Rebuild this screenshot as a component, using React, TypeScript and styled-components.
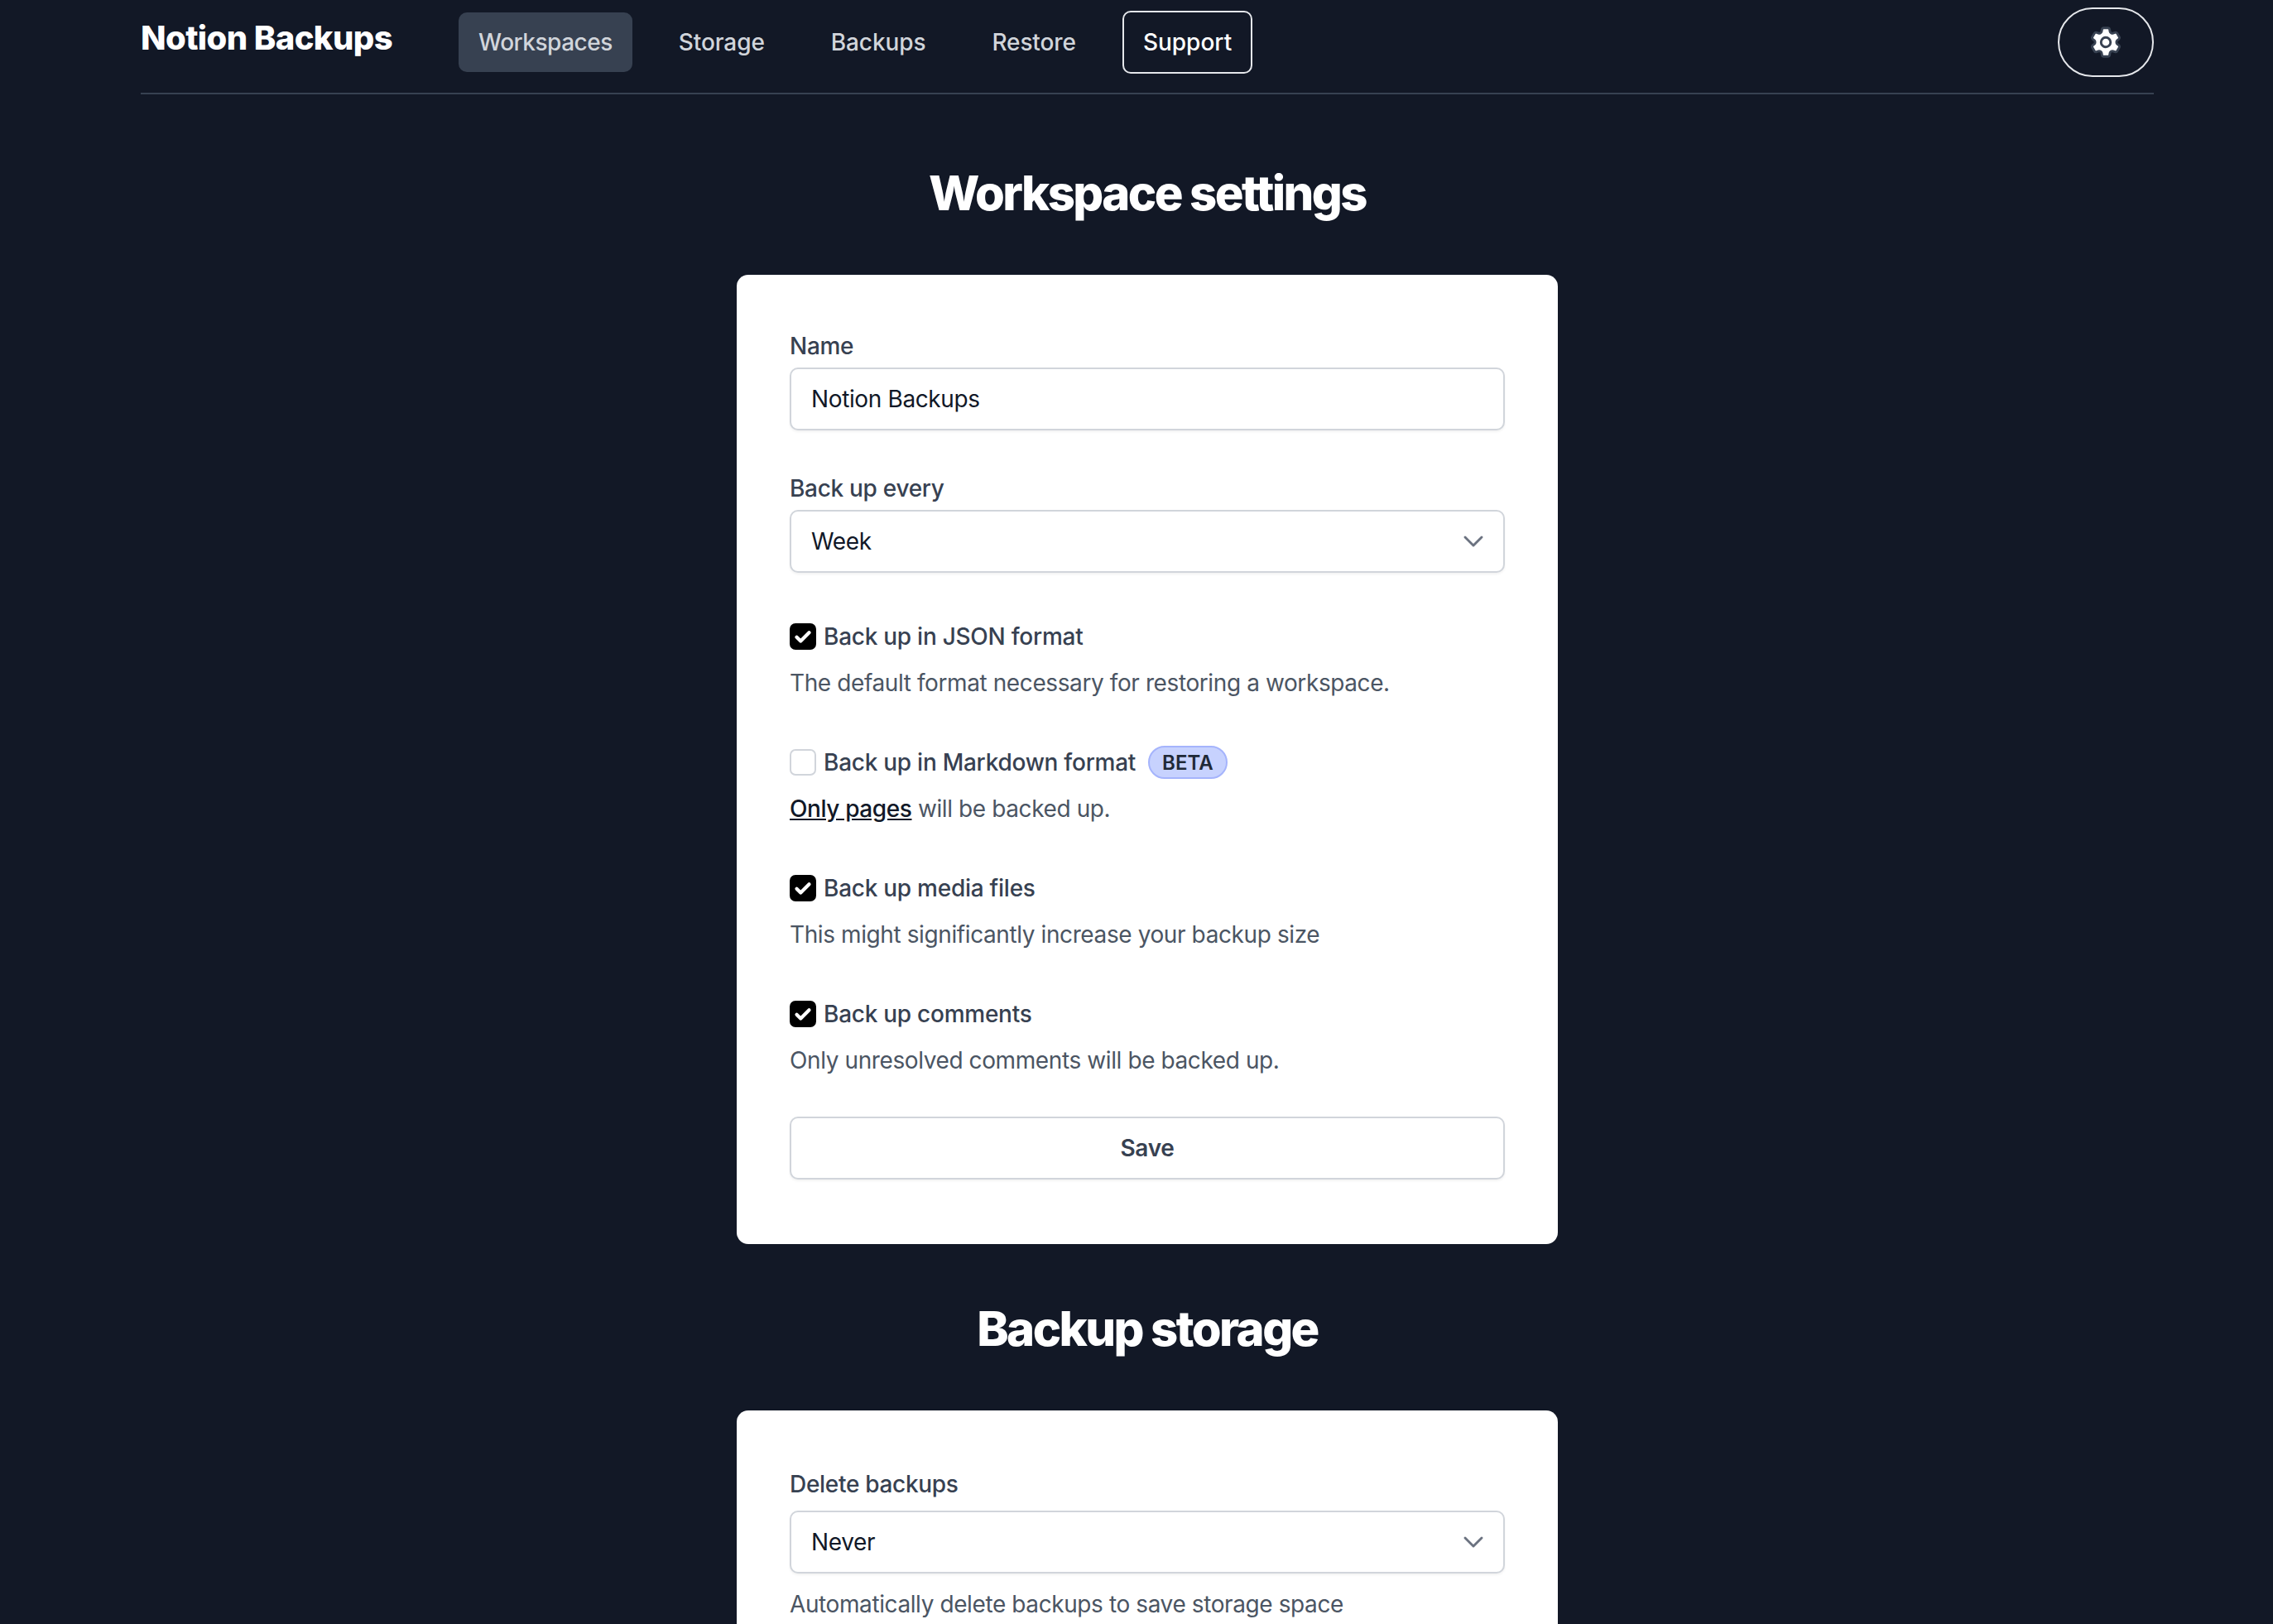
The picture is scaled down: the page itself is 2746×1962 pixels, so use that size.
import React from "react";
import styled, { createGlobalStyle } from "styled-components";
import { ChevronDown } from "lucide-react";

const GlobalStyle = createGlobalStyle`
  html, body {
    margin: 0;
    padding: 0;
    background: #121826;
    overflow: hidden;
    font-family: "Inter", "Liberation Sans", sans-serif;
  }
`;

const Page = styled.div`
  height: 1962px;
  overflow: hidden;
  padding: 0 144px 0 170px;
  background: #121826;
  box-sizing: border-box;
`;

const Header = styled.header`
  display: flex;
  align-items: center;
  height: 102px;
  padding-bottom: 10px;
  border-bottom: 2px solid #374151;
`;

const Brand = styled.div`
  width: 384px;
  margin-bottom: 10px;
  color: #ffffff;
  font-size: 40px;
  font-weight: 800;
  letter-spacing: -0.6px;
  line-height: 48px;
`;

const Nav = styled.nav`
  display: flex;
  align-items: center;
  gap: 32px;
  flex: 1;
`;

const NavItem = styled.a<{ $active?: boolean; $outlined?: boolean }>`
  display: flex;
  align-items: center;
  height: ${(p) => (p.$outlined ? "76px" : "72px")};
  padding: 0 ${(p) => (p.$outlined ? "23px" : "22px")};
  box-sizing: border-box;
  border-radius: 10px;
  border: 2px solid ${(p) => (p.$outlined ? "#e5e7eb" : "transparent")};
  background: ${(p) => (p.$active ? "#374151" : "transparent")};
  color: ${(p) => (p.$outlined ? "#ffffff" : "#d1d5db")};
  font-size: 28px;
  font-weight: 500;
  letter-spacing: ${(p) => (p.$active ? "-0.5px" : p.$outlined ? "0" : "-0.1px")};
`;

const SettingsButton = styled.button`
  display: flex;
  align-items: center;
  justify-content: center;
  width: 116px;
  height: 84px;
  padding: 0;
  background: transparent;
  border: 2px solid #e5e7eb;
  border-radius: 42px;
`;

const Main = styled.main`
  display: flex;
  flex-direction: column;
  align-items: center;
`;

const Heading = styled.h2<{ $first?: boolean }>`
  margin: ${(p) => (p.$first ? "84px" : "67px")} 0 64px;
  color: #ffffff;
  font-size: 58px;
  font-weight: 800;
  letter-spacing: -2.6px;
  line-height: 70px;
  text-align: center;
`;

const Card = styled.section`
  display: flex;
  flex-direction: column;
  width: 992px;
  box-sizing: border-box;
  padding: 69px 64px 78px;
  background: #ffffff;
  border-radius: 14px;
`;

const Field = styled.div<{ $gap?: number; $top?: number }>`
  display: flex;
  flex-direction: column;
  margin-top: ${(p) => p.$top ?? 0}px;
  margin-bottom: ${(p) => p.$gap ?? 0}px;
`;

const Label = styled.label<{ $gap?: number }>`
  margin-bottom: ${(p) => p.$gap ?? 8}px;
  color: #374151;
  font-size: 28px;
  font-weight: 530;
  letter-spacing: -0.3px;
  line-height: 35px;
`;

const TextInput = styled.input`
  height: 76px;
  padding: 0 24px;
  box-sizing: border-box;
  border: 2px solid #d1d5db;
  border-radius: 10px;
  box-shadow: 0 2px 3px rgba(0, 0, 0, 0.05);
  color: #111827;
  font-family: inherit;
  font-size: 28px;
  letter-spacing: -0.37px;
  outline: none;
`;

const SelectWrap = styled.div`
  position: relative;
  display: flex;
`;

const Select = styled.select`
  flex: 1;
  height: 76px;
  padding: 0 24px;
  box-sizing: border-box;
  appearance: none;
  background: #ffffff;
  border: 2px solid #d1d5db;
  border-radius: 10px;
  box-shadow: 0 2px 3px rgba(0, 0, 0, 0.05);
  color: #111827;
  font-family: inherit;
  font-size: 28px;
  letter-spacing: -0.37px;
  outline: none;
`;

const Chevron = styled(ChevronDown)`
  position: absolute;
  top: 18px;
  right: 18px;
  color: #6b7280;
  pointer-events: none;
`;

const CheckRow = styled.div`
  display: flex;
  align-items: center;
  height: 36px;
  margin-bottom: 21px;
`;

const CheckBox = styled.span<{ $checked?: boolean }>`
  display: flex;
  align-items: center;
  justify-content: center;
  width: 32px;
  height: 32px;
  box-sizing: border-box;
  margin-right: 9px;
  border-radius: 7px;
  background: ${(p) => (p.$checked ? "#000000" : "#ffffff")};
  border: 2px solid ${(p) => (p.$checked ? "#000000" : "#d1d5db")};
`;

const CheckLabel = styled.span`
  color: #374151;
  font-size: 28px;
  font-weight: 530;
  letter-spacing: -0.26px;
  line-height: 35px;
`;

const Badge = styled.span`
  display: inline-flex;
  align-items: center;
  height: 40px;
  margin-left: 15px;
  padding: 0 15px;
  box-sizing: border-box;
  background: #c7d2fe;
  border: 2px solid #a5b4fc;
  border-radius: 20px;
  color: #1f2937;
  font-size: 24px;
  font-weight: 600;
`;

const Help = styled.p<{ $gap?: number }>`
  margin: 0 0 ${(p) => p.$gap ?? 60}px;
  color: #4b5563;
  font-size: 28px;
  letter-spacing: -0.4px;
  line-height: 35px;
`;

const HelpLink = styled.a`
  color: #111827;
  font-weight: 500;
  text-decoration: underline;
`;

const SaveButton = styled.button`
  height: 76px;
  background: #ffffff;
  border: 2px solid #d1d5db;
  border-radius: 10px;
  box-shadow: 0 2px 3px rgba(0, 0, 0, 0.05);
  color: #374151;
  font-family: inherit;
  font-size: 28px;
  font-weight: 600;
  letter-spacing: -0.3px;
`;

const CheckMark = () => (
  <svg width="24" height="24" viewBox="0 0 16 16" fill="none">
    <path
      d="M3 8.5l3.2 3.2L13 4.8"
      stroke="#ffffff"
      strokeWidth="2.8"
      strokeLinecap="round"
      strokeLinejoin="round"
    />
  </svg>
);

const GearIcon = () => (
  <svg
    width="46"
    height="46"
    viewBox="0 0 24 24"
    fill="#ffffff"
    stroke="#374151"
    strokeWidth="1.5"
    strokeLinecap="round"
    strokeLinejoin="round"
  >
    <path d="M9.594 3.94c.09-.542.56-.94 1.11-.94h2.593c.55 0 1.02.398 1.11.94l.213 1.281c.063.374.313.686.645.87.074.04.147.083.22.127.324.196.72.257 1.075.124l1.217-.456a1.125 1.125 0 011.37.49l1.296 2.247a1.125 1.125 0 01-.26 1.431l-1.003.827c-.293.24-.438.613-.431.992a6.759 6.759 0 010 .255c-.007.378.138.75.43.99l1.005.828c.424.35.534.954.26 1.43l-1.298 2.247a1.125 1.125 0 01-1.369.491l-1.217-.456c-.355-.133-.75-.072-1.076.124a6.57 6.57 0 01-.22.128c-.331.183-.581.495-.644.869l-.213 1.28c-.09.543-.56.941-1.11.941h-2.594c-.55 0-1.02-.398-1.11-.94l-.213-1.281c-.062-.374-.312-.686-.644-.87a6.52 6.52 0 01-.22-.127c-.325-.196-.72-.257-1.076-.124l-1.217.456a1.125 1.125 0 01-1.369-.49l-1.297-2.247a1.125 1.125 0 01.26-1.431l1.004-.827c.292-.24.437-.613.43-.992a6.932 6.932 0 010-.255c.007-.378-.138-.75-.43-.99l-1.004-.828a1.125 1.125 0 01-.26-1.43l1.297-2.247a1.125 1.125 0 011.37-.491l1.216.456c.356.133.751.072 1.076-.124.072-.044.146-.087.22-.128.332-.183.582-.495.644-.869l.214-1.281z" />
    <path d="M15 12a3 3 0 11-6 0 3 3 0 016 0z" />
  </svg>
);

const App: React.FC = () => {
  return (
    <Page>
      <GlobalStyle />
      <Header>
        <Brand>Notion Backups</Brand>
        <Nav>
          <NavItem $active>Workspaces</NavItem>
          <NavItem>Storage</NavItem>
          <NavItem>Backups</NavItem>
          <NavItem>Restore</NavItem>
          <NavItem $outlined>Support</NavItem>
        </Nav>
        <SettingsButton aria-label="Settings">
          <GearIcon />
        </SettingsButton>
      </Header>
      <Main>
        <Heading $first>Workspace settings</Heading>
        <Card>
          <Field $gap={53}>
            <Label>Name</Label>
            <TextInput defaultValue="Notion Backups" />
          </Field>
          <Field $gap={59}>
            <Label>Back up every</Label>
            <SelectWrap>
              <Select defaultValue="Week">
                <option>Day</option>
                <option>Week</option>
                <option>Month</option>
              </Select>
              <Chevron size={40} strokeWidth={1.7} />
            </SelectWrap>
          </Field>
          <CheckRow>
            <CheckBox $checked>
              <CheckMark />
            </CheckBox>
            <CheckLabel>Back up in JSON format</CheckLabel>
          </CheckRow>
          <Help>The default format necessary for restoring a workspace.</Help>
          <CheckRow>
            <CheckBox />
            <CheckLabel>Back up in Markdown format</CheckLabel>
            <Badge>BETA</Badge>
          </CheckRow>
          <Help>
            <HelpLink>Only pages</HelpLink> will be backed up.
          </Help>
          <CheckRow>
            <CheckBox $checked>
              <CheckMark />
            </CheckBox>
            <CheckLabel>Back up media files</CheckLabel>
          </CheckRow>
          <Help>This might significantly increase your backup size</Help>
          <CheckRow>
            <CheckBox $checked>
              <CheckMark />
            </CheckBox>
            <CheckLabel>Back up comments</CheckLabel>
          </CheckRow>
          <Help $gap={50}>Only unresolved comments will be backed up.</Help>
          <SaveButton>Save</SaveButton>
        </Card>
        <Heading>Backup storage</Heading>
        <Card>
          <Field $top={3} $gap={20}>
            <Label $gap={14}>Delete backups</Label>
            <SelectWrap>
              <Select defaultValue="Never">
                <option>Never</option>
                <option>After 30 days</option>
              </Select>
              <Chevron size={40} strokeWidth={1.7} />
            </SelectWrap>
          </Field>
          <Help>Automatically delete backups to save storage space</Help>
        </Card>
      </Main>
    </Page>
  );
};

export default App;
